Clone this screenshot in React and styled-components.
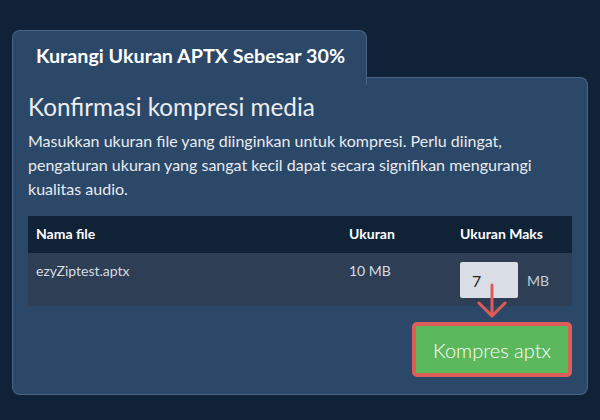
import styled, { createGlobalStyle } from "styled-components";

const GlobalStyle = createGlobalStyle`
  html, body {
    margin: 0;
    padding: 0;
    background: #0f2238;
    font-family: Lato, "Noto Sans", sans-serif;
  }
  * { box-sizing: border-box; }
`;

const rows = [{ name: "ezyZiptest.aptx", size: "10 MB", max: "7" }];

export default function App() {
  return (
    <>
      <GlobalStyle />
      <Page>
        <TabRow>
          <Tab>Kurangi Ukuran APTX Sebesar 30%</Tab>
          <TabFiller />
        </TabRow>
        <Panel>
          <Heading>Konfirmasi kompresi media</Heading>
          <Lead>
            Masukkan ukuran file yang diinginkan untuk kompresi. Perlu diingat,
            pengaturan ukuran yang sangat kecil dapat secara signifikan
            mengurangi kualitas audio.
          </Lead>
          <Table>
            <thead>
              <tr>
                <Th $w="313px">Nama file</Th>
                <Th $w="111px">Ukuran</Th>
                <Th>Ukuran Maks</Th>
              </tr>
            </thead>
            <tbody>
              {rows.map((r) => (
                <Row key={r.name}>
                  <Td>{r.name}</Td>
                  <Td>{r.size}</Td>
                  <Td>
                    <SizeField>
                      <SizeInput defaultValue={r.max} />
                      <Unit>MB</Unit>
                      <Arrow width="30" height="36" viewBox="0 0 30 36">
                        <path
                          d="M15 2 L15 33 M2 20 L15 33 L28 20"
                          fill="none"
                          stroke="#e05b58"
                          strokeWidth="3"
                          strokeLinecap="round"
                          strokeLinejoin="round"
                        />
                      </Arrow>
                    </SizeField>
                  </Td>
                </Row>
              ))}
            </tbody>
          </Table>
          <Actions>
            <CompressButton>Kompres aptx</CompressButton>
          </Actions>
        </Panel>
      </Page>
    </>
  );
}

const Page = styled.div`
  width: 600px;
  height: 420px;
  padding: 30px 12px 0 12px;
`;

const TabRow = styled.div`
  display: flex;
  height: 55px;
`;

const Tab = styled.div`
  width: 355px;
  background: #2c4868;
  border: 1px solid #4a6584;
  border-bottom: none;
  border-radius: 8px 8px 0 0;
  padding: 13px 0 0 23px;
  color: #ffffff;
  font-size: 19.7px;
  font-weight: 700;
  line-height: 24px;
  white-space: nowrap;
`;

const TabFiller = styled.div`
  flex: 1;
  align-self: flex-end;
  height: 8px;
  background: #2c4868;
  border-top: 1px solid #4a6584;
  border-right: 1px solid #4a6584;
  border-top-right-radius: 8px;
`;

const Panel = styled.div`
  background: #2c4868;
  border: 1px solid #4a6584;
  border-top: none;
  border-radius: 0 0 8px 8px;
  padding: 7px 15px 17px 15px;
`;

const Heading = styled.h2`
  margin: 0;
  font-size: 24.3px;
  font-weight: 400;
  line-height: 29px;
  color: #ebedf0;
`;

const Lead = styled.p`
  margin: 8px 0 15px 0;
  font-size: 16px;
  line-height: 24px;
  color: #e8ebef;
`;

const Table = styled.table`
  width: 100%;
  border-collapse: collapse;
  font-size: 14px;
  line-height: 20px;
`;

const Th = styled.th`
  width: ${(p) => p.$w || "auto"};
  background: #0f2236;
  color: #ffffff;
  font-weight: 700;
  text-align: left;
  padding: 8px 8px 9px 8px;
`;

const Row = styled.tr`
  background: #2e3f55;
`;

const Td = styled.td`
  vertical-align: top;
  padding: 8px 8px 8px 8px;
  color: #d6dbe2;
`;

const SizeField = styled.div`
  position: relative;
  display: flex;
  align-items: center;
  gap: 9px;
  margin-top: 1px;
`;

const SizeInput = styled.input`
  width: 58px;
  height: 36px;
  border: none;
  border-radius: 2px;
  background: #d8dde6;
  padding: 0 0 0 12px;
  font-family: Lato, "Noto Sans", sans-serif;
  font-size: 16px;
  color: #222;
  outline: none;
`;

const Unit = styled.span`
  color: #c7cdd6;
  font-size: 14px;
  padding-top: 1px;
`;

const Arrow = styled.svg`
  position: absolute;
  left: 17px;
  top: 21px;
  pointer-events: none;
`;

const Actions = styled.div`
  display: flex;
  justify-content: flex-end;
  margin-top: 16px;
`;

const CompressButton = styled.button`
  width: 160px;
  height: 55px;
  background: #5cb85c;
  border: 4px solid #df5e5a;
  border-radius: 5px;
  color: #ffffff;
  font-family: Lato, "Noto Sans", sans-serif;
  font-size: 20px;
  font-weight: 300;
  padding: 0;
  cursor: pointer;
`;
